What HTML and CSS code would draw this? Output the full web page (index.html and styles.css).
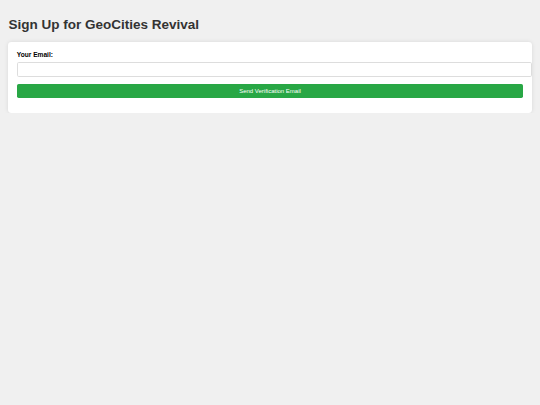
FILE: index.html
```html
<!DOCTYPE html>
<html lang="en">
<head>
<meta charset="utf-8">
<title>Sign Up for GeoCities Revival</title>
<link rel="stylesheet" href="styles.css">
</head>
<body>
  <h1 class="title">Sign Up for GeoCities Revival</h1>
  <div class="card">
    <form class="signup">
      <label class="label" for="email">Your Email:</label>
      <input class="field" type="email" id="email">
      <button class="submit" type="button">Send Verification Email</button>
    </form>
  </div>
</body>
</html>
```

FILE: styles.css
```css
html, body {
  margin: 0;
  background: #f0f0f0;
}
body {
  padding: 0 8.4px;
  font-family: "Liberation Sans", Arial, sans-serif;
  color: #333;
}
.title {
  font-size: 13.5px;
  font-weight: bold;
  margin: 0;
  padding-top: 17.4px;
  padding-bottom: 9.6px;
  line-height: 1.117;
  color: #333;
}
.card {
  background: #fff;
  border-radius: 3.4px;
  box-shadow: 0 0 4px rgba(0, 0, 0, 0.1);
  padding: 8.4px 8.4px 8.4px;
}
.signup {
  display: flex;
  flex-direction: column;
  align-items: flex-start;
}
.label {
  font-size: 6.6px;
  font-weight: bold;
  color: #000;
  line-height: 7.4px;
  margin-top: 0.4px;
  margin-bottom: 3.4px;
}
.field {
  box-sizing: content-box;
  width: 100%;
  height: 13px;
  padding: 0 3.6px;
  margin: 0;
  border: 1px solid #ddd;
  border-radius: 1.7px;
  font-size: 6px;
  background: #fff;
}
.submit {
  width: 100%;
  height: 14.5px;
  margin-top: 7px;
  margin-bottom: 6px;
  padding: 0;
  border: none;
  border-radius: 1.7px;
  background: #28a745;
  color: #fff;
  font-family: "Liberation Sans", Arial, sans-serif;
  font-size: 6px;
  line-height: 14.5px;
}
```
